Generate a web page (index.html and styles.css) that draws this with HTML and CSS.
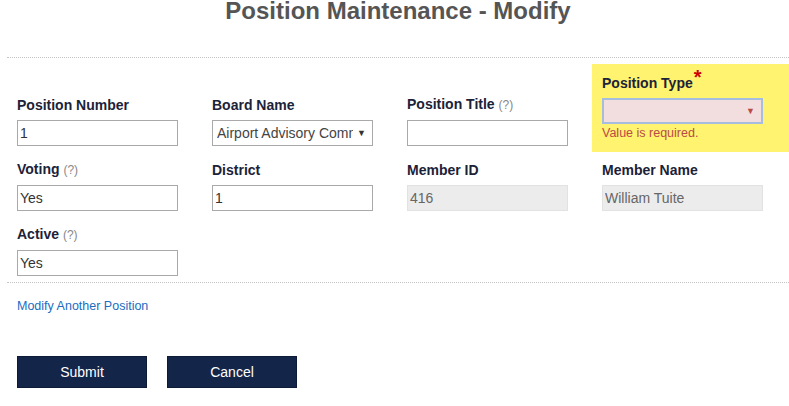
FILE: index.html
```html
<!DOCTYPE html>
<html lang="en">
<head>
<meta charset="utf-8">
<title>Position Maintenance - Modify</title>
<link rel="stylesheet" href="styles.css">
</head>
<body>
<div class="page">
  <h1 class="title">Position Maintenance - Modify</h1>
  <form class="form">
    <div class="row">
      <div class="cell">
        <label class="label">Position Number</label>
        <input class="field" type="text" value="1">
      </div>
      <div class="cell">
        <label class="label">Board Name</label>
        <div class="field select">
          <span class="select-text">Airport Advisory Comm</span>
          <span class="arrow">&#9660;</span>
        </div>
      </div>
      <div class="cell">
        <label class="label">Position Title <span class="help">(?)</span></label>
        <input class="field" type="text" value="">
      </div>
      <div class="cell cell-error">
        <label class="label">Position Type<span class="req">*</span></label>
        <div class="field select select-error">
          <span class="select-text"></span>
          <span class="arrow arrow-error">&#9660;</span>
        </div>
        <div class="error-msg">Value is required.</div>
      </div>
    </div>
    <div class="row">
      <div class="cell">
        <label class="label">Voting <span class="help">(?)</span></label>
        <input class="field" type="text" value="Yes">
      </div>
      <div class="cell">
        <label class="label">District</label>
        <input class="field" type="text" value="1">
      </div>
      <div class="cell">
        <label class="label">Member ID</label>
        <input class="field disabled" type="text" value="416" disabled>
      </div>
      <div class="cell">
        <label class="label">Member Name</label>
        <input class="field disabled" type="text" value="William Tuite" disabled>
      </div>
    </div>
    <div class="row row-last">
      <div class="cell">
        <label class="label">Active <span class="help">(?)</span></label>
        <input class="field" type="text" value="Yes">
      </div>
    </div>
    <div class="links">
      <a class="link" href="#">Modify Another Position</a>
    </div>
    <div class="buttons">
      <button class="btn" type="button">Submit</button>
      <button class="btn" type="button">Cancel</button>
    </div>
  </form>
</div>
</body>
</html>
```

FILE: styles.css
```css
html, body {
  margin: 0;
  padding: 0;
  background: #fff;
}
body {
  font-family: "Liberation Sans", Arial, sans-serif;
  color: #333;
  overflow: hidden;
}
.page {
  margin-left: 7px;
}
.title {
  margin: 1px 0 0 0;
  font-size: 24px;
  line-height: 20px;
  font-weight: bold;
  color: #555;
  text-align: center;
}
.form {
  margin-top: 36px;
  border-top: 1px dotted #c4c4c4;
  padding-top: 6px;
}
.row {
  display: flex;
  align-items: flex-end;
  margin-bottom: 9px;
}
.row-last {
  margin-bottom: 0;
  border-bottom: 1px dotted #c4c4c4;
}
.cell {
  width: 195px;
  box-sizing: border-box;
  padding: 0 10px 6px 10px;
}
.cell-error {
  width: 197px;
  background: #fff36f;
  padding: 11px 10px 10px 10px;
}
.label {
  display: block;
  font-size: 14px;
  line-height: 17px;
  font-weight: bold;
  color: #1c2238;
  margin-bottom: 6px;
  white-space: nowrap;
}
.help {
  font-weight: normal;
  font-size: 12px;
  color: #888;
}
.req {
  color: #c00;
  font-size: 20px;
  position: relative;
  top: -4px;
  margin-left: 1px;
  line-height: 0;
}
.field {
  display: block;
  box-sizing: border-box;
  width: 161px;
  height: 26px;
  margin: 0;
  padding: 0 2px;
  border: 1px solid #a9a9a9;
  background: #fff;
  font-family: "Liberation Sans", Arial, sans-serif;
  font-size: 14px;
  color: #333;
  outline: none;
}
.field.disabled {
  background: #ececec;
  border-color: #e2e2e2;
  color: #666;
}
.select {
  display: flex;
  align-items: center;
  padding: 0 6px 0 4px;
  overflow: hidden;
}
.select-text {
  flex: 1;
  white-space: nowrap;
  overflow: hidden;
  color: #444;
}
.arrow {
  font-size: 9px;
  color: #333;
  margin-left: 4px;
}
.select-error {
  background: #f2dede;
  border: 2px solid #a6bde0;
}
.arrow-error {
  color: #b94a48;
}
.error-msg {
  margin-top: 1px;
  font-size: 12.5px;
  line-height: 17px;
  color: #b94a48;
}
.links {
  padding: 13px 10px 0 10px;
  height: 27px;
}
.link {
  font-size: 12.5px;
  color: #1a6dbf;
  text-decoration: none;
}
.buttons {
  display: flex;
  gap: 20px;
  padding: 33px 10px 0 10px;
}
.btn {
  width: 130px;
  height: 32px;
  margin: 0;
  background: #14254a;
  border: 1px solid #0c1a36;
  color: #fff;
  font-family: "Liberation Sans", Arial, sans-serif;
  font-size: 14px;
  cursor: pointer;
}
```
